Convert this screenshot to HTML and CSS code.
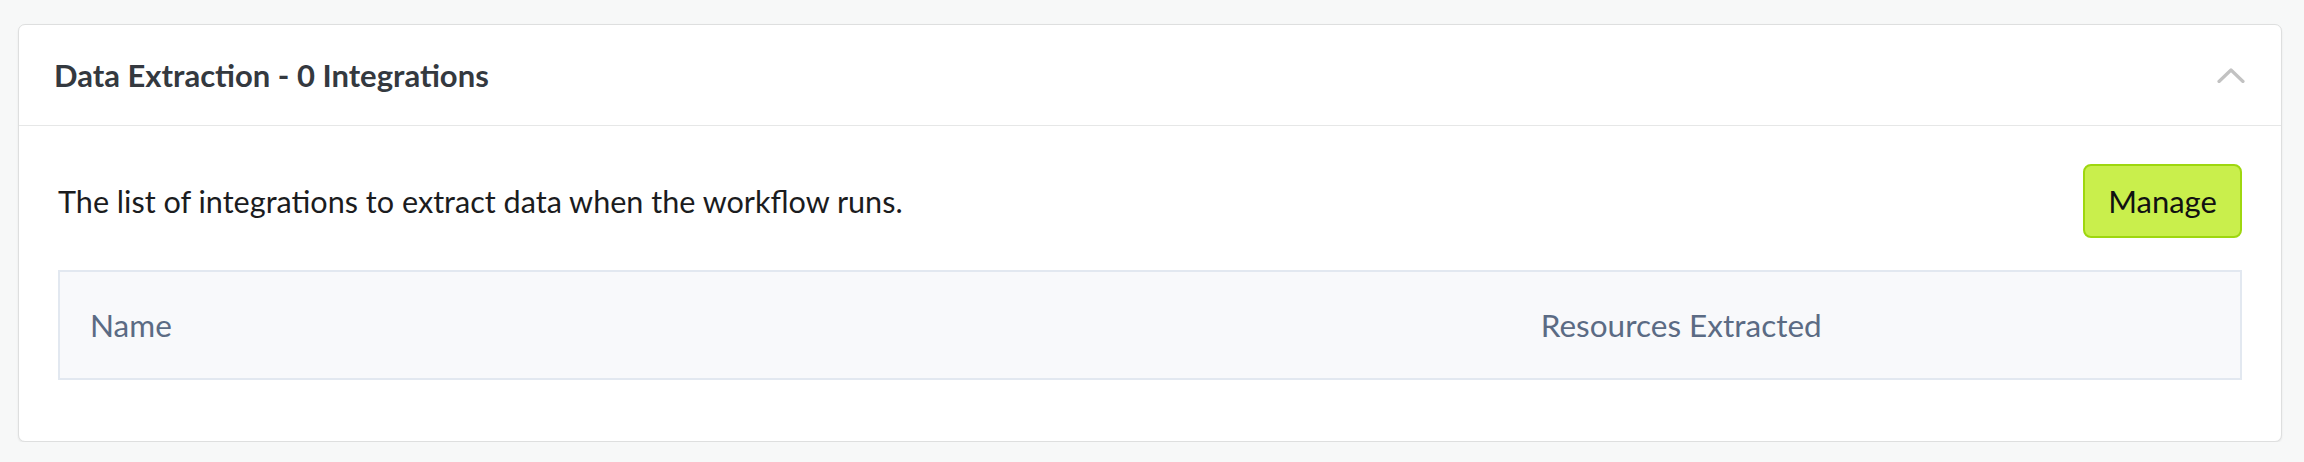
FILE: index.html
```html
<!DOCTYPE html>
<html lang="en">
<head>
<meta charset="utf-8">
<title>Data Extraction</title>
<link rel="stylesheet" href="styles.css">
</head>
<body>
<section class="card">
  <header class="card-header">
    <h2 class="card-title">Data Extraction - 0 Integrations</h2>
    <svg class="chevron" width="28" height="16" viewBox="0 0 28 16" aria-hidden="true">
      <path d="M2 14.5 L14 3 L26 14.5" fill="none" stroke="#c2c2c2" stroke-width="3.2" stroke-linecap="round" stroke-linejoin="round"/>
    </svg>
  </header>
  <div class="card-body">
    <div class="intro">
      <p class="intro-text">The list of integrations to extract data when the workflow runs.</p>
      <button class="btn-manage" type="button">Manage</button>
    </div>
    <div class="table">
      <div class="table-head">
        <div class="col col-name">Name</div>
        <div class="col col-res">Resources Extracted</div>
      </div>
    </div>
  </div>
</section>
</body>
</html>
```
FILE: styles.css
```css
html, body {
  margin: 0;
  padding: 0;
}
body {
  background: #f7f8f8;
  font-family: Lato, "Open Sans", "Liberation Sans", sans-serif;
  padding: 24px 22px 0 18px;
}
.card {
  background: #ffffff;
  border: 1px solid #dedfdf;
  border-radius: 7px;
  box-shadow: 0 1px 2px rgba(0, 0, 0, 0.08);
}
.card-header {
  display: flex;
  align-items: center;
  justify-content: space-between;
  height: 100px;
  padding: 0 36px 0 35px;
  border-bottom: 1px solid #e6e7e7;
}
.card-title {
  margin: 0;
  font-size: 31px;
  font-weight: 700;
  color: #34393f;
}
.chevron {
  display: block;
}
.card-body {
  padding: 38px 39px 61px 39px;
}
.intro {
  display: flex;
  align-items: center;
  justify-content: space-between;
}
.intro-text {
  margin: 0;
  font-size: 30.6px;
  color: #1b1c1e;
}
.btn-manage {
  font-family: inherit;
  font-size: 31px;
  color: #111111;
  background: #c9ef4c;
  border: 2px solid #9ed70f;
  border-radius: 8px;
  width: 159px;
  height: 74px;
  padding: 0;
}
.table {
  margin-top: 32px;
  background: #f8f9fb;
  border: 2px solid #e2e8f0;
}
.table-head {
  display: grid;
  grid-template-columns: 66.55% 33.45%;
  height: 106px;
  align-items: center;
}
.col {
  padding-left: 30px;
  font-size: 31.5px;
  color: #5b6b84;
}
```
